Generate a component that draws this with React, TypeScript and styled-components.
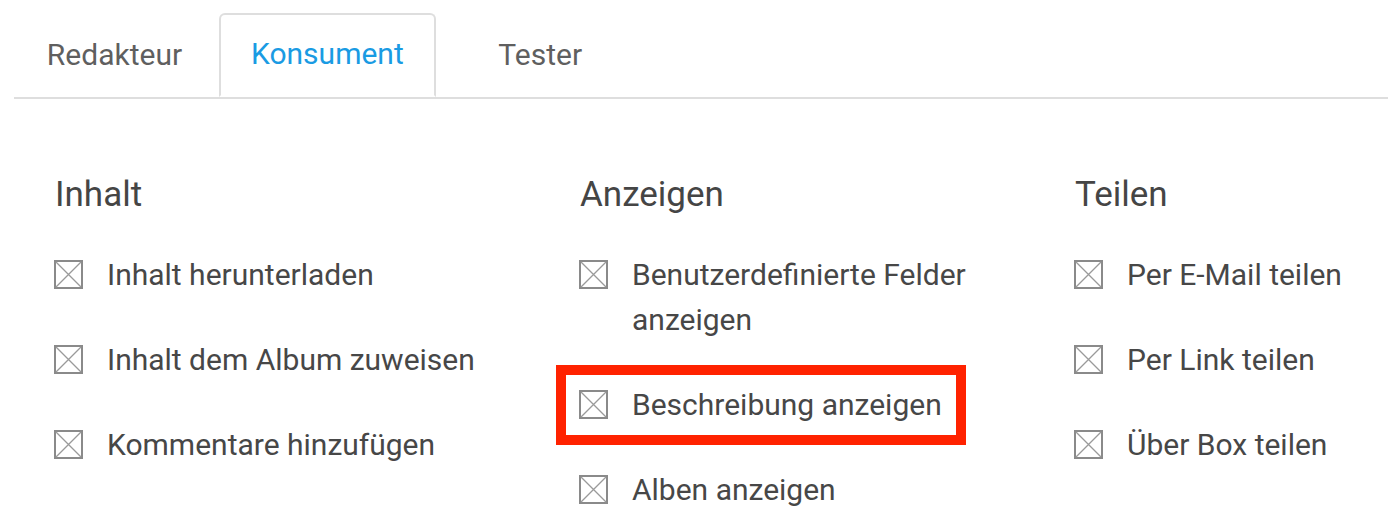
import React from "react";
import styled, { createGlobalStyle } from "styled-components";

const GlobalStyle = createGlobalStyle`
  html, body {
    margin: 0;
    padding: 0;
    background: #ffffff;
    font-family: Roboto, "Liberation Sans", Arial, sans-serif;
  }
`;

type Permission = { label: string; highlighted?: boolean };
type Group = { title: string; items: Permission[] };

const tabs = ["Redakteur", "Konsument", "Tester"];

const groups: Group[] = [
  {
    title: "Inhalt",
    items: [
      { label: "Inhalt herunterladen" },
      { label: "Inhalt dem Album zuweisen" },
      { label: "Kommentare hinzufügen" },
    ],
  },
  {
    title: "Anzeigen",
    items: [
      { label: "Benutzerdefinierte Felder anzeigen" },
      { label: "Beschreibung anzeigen", highlighted: true },
      { label: "Alben anzeigen" },
    ],
  },
  {
    title: "Teilen",
    items: [
      { label: "Per E-Mail teilen" },
      { label: "Per Link teilen" },
      { label: "Über Box teilen" },
    ],
  },
];

const Page = styled.div`
  padding: 13px 0 0 14px;
  height: 499px;
  overflow: hidden;
`;

const TabBar = styled.div`
  display: flex;
  gap: 4px;
  border-bottom: 2px solid #dedede;
`;

const Tab = styled.div<{ $active?: boolean }>`
  display: flex;
  align-items: center;
  justify-content: center;
  min-width: 201px;
  height: 84px;
  padding: 0 30px 3px;
  box-sizing: border-box;
  margin-bottom: ${({ $active }) => ($active ? "-2px" : "0")};
  font-size: 30px;
  color: ${({ $active }) => ($active ? "#1a9be3" : "#5f5f5f")};
  border: 2px solid ${({ $active }) => ($active ? "#dedede" : "transparent")};
  border-bottom: ${({ $active }) => ($active ? "2px solid #ffffff" : "0")};
  border-radius: 6px 6px 0 0;
  background: ${({ $active }) => ($active ? "#ffffff" : "transparent")};
`;

const Columns = styled.div`
  display: grid;
  grid-template-columns: 525px 495px 1fr;
  padding: 74px 0 0 40px;
`;

const Column = styled.section`
  display: flex;
  flex-direction: column;
`;

const Heading = styled.h2`
  margin: 1px 0 36px 1px;
  font-size: 35px;
  line-height: 42px;
  font-weight: 400;
  color: #454545;
`;

const List = styled.ul`
  list-style: none;
  margin: 0;
  padding: 0;
  display: flex;
  flex-direction: column;
  gap: 40px;
`;

const Item = styled.li`
  position: relative;
  display: flex;
  align-items: flex-start;
  gap: 24px;
`;

const Label = styled.span`
  max-width: 441px;
  font-size: 30px;
  line-height: 45px;
  color: #474747;
`;

const CheckBox = styled.svg`
  flex: none;
  width: 29px;
  height: 29px;
  margin-top: 8px;
`;

const Highlight = styled.span`
  position: absolute;
  left: -23px;
  top: -17px;
  width: 410px;
  height: 80px;
  box-sizing: border-box;
  border: 10px solid #ff2200;
  pointer-events: none;
`;

function CrossBox() {
  return (
    <CheckBox viewBox="0 0 29 29" aria-hidden="true">
      <rect x="1" y="1" width="27" height="27" fill="none" stroke="#8a8a8a" strokeWidth="2" />
      <path d="M2 2 L27 27 M27 2 L2 27" stroke="#9a9a9a" strokeWidth="1.3" />
    </CheckBox>
  );
}

export default function App() {
  return (
    <Page>
      <GlobalStyle />
      <TabBar>
        {tabs.map((tab) => (
          <Tab key={tab} $active={tab === "Konsument"}>
            {tab}
          </Tab>
        ))}
      </TabBar>

      <Columns>
        {groups.map((group) => (
          <Column key={group.title}>
            <Heading>{group.title}</Heading>
            <List>
              {group.items.map((item) => (
                <Item key={item.label}>
                  <CrossBox />
                  <Label>{item.label}</Label>
                  {item.highlighted && <Highlight />}
                </Item>
              ))}
            </List>
          </Column>
        ))}
      </Columns>
    </Page>
  );
}
